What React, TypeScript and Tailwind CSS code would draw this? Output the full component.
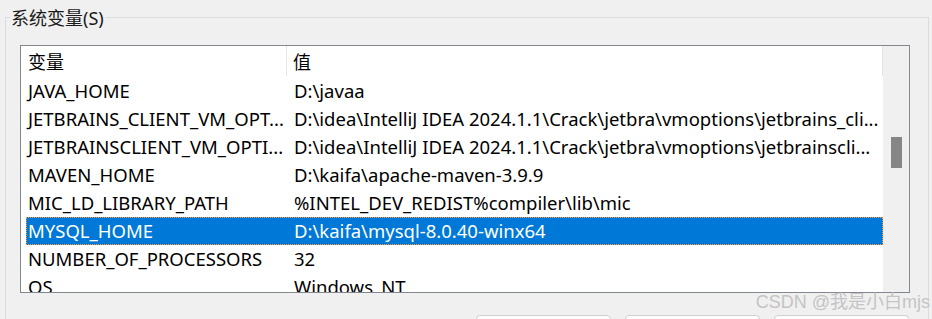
const rows: [string, string][] = [
	['JAVA_HOME', 'D:\\javaa'],
	['JETBRAINS_CLIENT_VM_OPT...', 'D:\\idea\\IntelliJ IDEA 2024.1.1\\Crack\\jetbra\\vmoptions\\jetbrains_cli...'],
	['JETBRAINSCLIENT_VM_OPTI...', 'D:\\idea\\IntelliJ IDEA 2024.1.1\\Crack\\jetbra\\vmoptions\\jetbrainscli...'],
	['MAVEN_HOME', 'D:\\kaifa\\apache-maven-3.9.9'],
	['MIC_LD_LIBRARY_PATH', '%INTEL_DEV_REDIST%compiler\\lib\\mic'],
	['MYSQL_HOME', 'D:\\kaifa\\mysql-8.0.40-winx64'],
	['NUMBER_OF_PROCESSORS', '32'],
	['OS', 'Windows_NT'],
];

const font = "font-['Noto_Sans','Noto_Sans_CJK_SC',sans-serif]";

export default function App() {
	return (
		<div className={`relative w-[932px] h-[319px] overflow-hidden bg-[#f0f0f0] text-black ${font}`}>
			<fieldset className="ml-[5px] mr-[3px] border border-[#dcdcdc] px-0 pb-6 min-w-0">
				<legend className="ml-[4px] px-[1px] pt-[3px] text-[18px] leading-[31px] text-[#1a1a1a]">系统变量(S)</legend>
				<div className="pl-[14px] pr-[18px]">
					<div className="mt-[11px] h-[248px] border border-[#828790] bg-white flex overflow-hidden">
						<div className="flex-1 min-w-0 flex flex-col">
							<div className="h-[31px] flex shrink-0 text-[18px] leading-[28px]">
								<div className="w-[266px] pl-[7px] pt-[2px] border-r border-[#e5e5e5] mb-[1px]">变量</div>
								<div className="flex-1 pl-[6px] pt-[2px] border-r border-[#e5e5e5] mb-[1px]">值</div>
							</div>
							{rows.map(([name, value], i) => {
								const selected = i === 5;
								return (
									<div
										key={name}
										className={`ml-[5px] h-[28px] shrink-0 flex items-center text-[18.5px] whitespace-nowrap ${
											selected ? 'bg-[#0078d7] text-white outline outline-1 outline-dotted outline-[#ff9a2e] -outline-offset-1' : ''
										}`}>
										<div className="w-[261px] pl-[2px] overflow-hidden">{name}</div>
										<div className="flex-1 pl-[7px] overflow-hidden">{value}</div>
									</div>
								);
							})}
						</div>
						<div className="w-[26px] shrink-0 bg-[#f0f0f0] flex justify-center pt-[91px]">
							<div className="w-[11px] h-[31px] bg-[#868686]" />
						</div>
					</div>
					<div className="mt-[22px] flex justify-end gap-[14px] pr-[1px]">
						<div className="w-[135px] h-[32px] rounded-[4px] border border-[#d0d0d0] bg-[#fdfdfd]" />
						<div className="w-[135px] h-[32px] rounded-[4px] border border-[#d0d0d0] bg-[#fdfdfd]" />
						<div className="w-[135px] h-[32px] rounded-[4px] border border-[#d0d0d0] bg-[#fdfdfd]" />
					</div>
				</div>
			</fieldset>
			<div className="absolute right-[2px] bottom-[7px] text-[18px] leading-[20px] text-[#c4c4c4] font-['Liberation_Sans','Noto_Sans_CJK_SC',sans-serif]">
				CSDN @我是小白mjs
			</div>
		</div>
	);
}
